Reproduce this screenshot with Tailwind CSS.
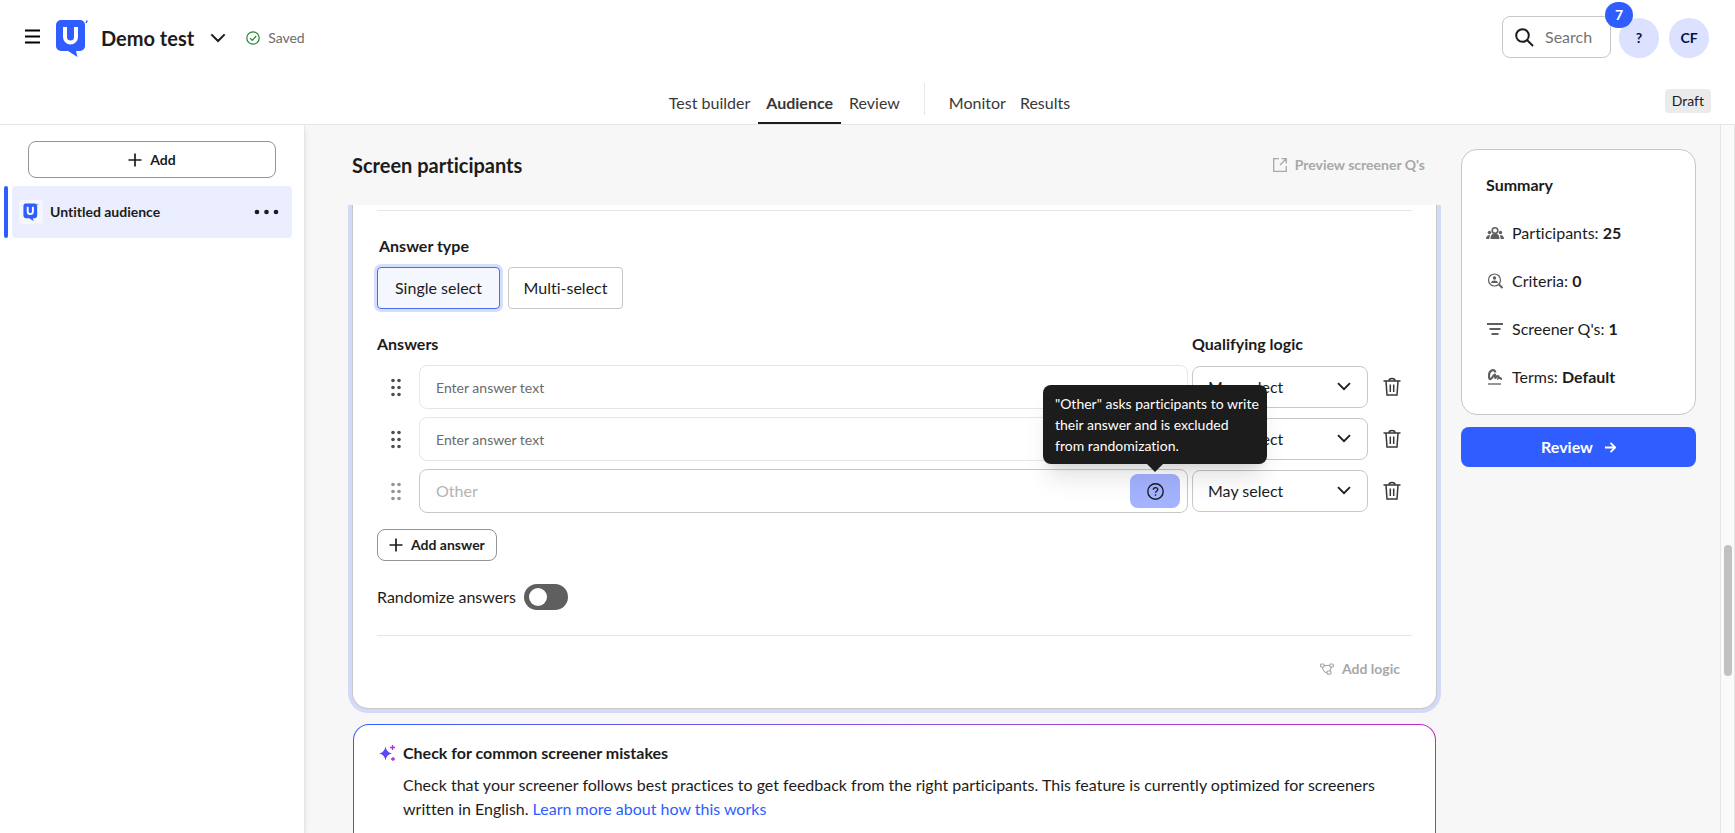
<!DOCTYPE html>
<html lang="en">
<head>
  <meta charset="UTF-8" />
  <meta name="viewport" content="width=device-width, initial-scale=1.0"/>
  <title>Demo test - Audience</title>

  <!-- Tailwind CDN -->
  <script src="https://cdn.jsdelivr.net/npm/@tailwindcss/browser@4"></script>
</head>

<body class="h-screen flex flex-col overflow-hidden bg-white text-[#1c1c1c] text-base font-['Lato','Open_Sans',sans-serif] [font-variant-ligatures:none]">

  <!-- Shared icons -->
  <svg class="hidden">
    <symbol id="logo" viewBox="0 0 32 38">
      <path fill="#305dff" d="M5 1h19a5 5 0 0 1 5 5v21a5 5 0 0 1-5 5h-4l1.500 6L12 32H5a5 5 0 0 1-5-5V6a5 5 0 0 1 5-5z"/>
      <path fill="none" stroke="#fff" stroke-width="4" d="M9 8v10a5.500 5.500 0 0 0 11 0V8"/>
      <path stroke="#305dff" stroke-width="1.500" d="M30 4l1.200-2.500"/>
    </symbol>
    <symbol id="plus" viewBox="0 0 14 14">
      <path fill="none" stroke="currentColor" stroke-width="1.700" d="M7 .5v13M.5 7h13"/>
    </symbol>
    <symbol id="chevron" viewBox="0 0 14 9">
      <path fill="none" stroke="currentColor" stroke-width="1.800" d="M1 1.200l6 6 6-6"/>
    </symbol>
    <symbol id="grip" viewBox="0 0 10 19">
      <g fill="currentColor"><circle cx="2" cy="2.500" r="1.800"/><circle cx="8" cy="2.500" r="1.800"/><circle cx="2" cy="9.500" r="1.800"/><circle cx="8" cy="9.500" r="1.800"/><circle cx="2" cy="16.500" r="1.800"/><circle cx="8" cy="16.500" r="1.800"/></g>
    </symbol>
    <symbol id="trash" viewBox="0 0 18 20">
      <g fill="none" stroke="currentColor" stroke-width="1.500"><path d="M.5 4h17M6 4c0-3.300 6-3.300 6 0M3 4l1 14h10l1-14M7.300 7.500v7.500M10.700 7.500v7.500"/></g>
    </symbol>
  </svg>

  <!-- Header -->
  <header class="shrink-0 border-b border-[#e6e6e6]">
    <div class="flex items-start justify-between pl-[25px] pr-[26px] h-[79px] pt-4">
      <div class="flex items-center h-11">
        <button aria-label="Menu" class="mb-1">
          <svg class="w-[15px] h-[15px]" viewBox="0 0 15 15"><path stroke="#000" stroke-width="2" d="M0 1.500h15M0 7.500h15M0 13.500h15"/></svg>
        </button>
        <a href="#" aria-label="Home" class="ml-4"><svg class="w-8 h-[38px]"><use href="#logo"/></svg></a>
        <h1 class="ml-[13px] text-xl font-bold">Demo test</h1>
        <button aria-label="Test menu" class="ml-4"><svg class="w-4 h-[10px]"><use href="#chevron"/></svg></button>
        <svg class="ml-5 w-[14px] h-[14px]" viewBox="0 0 14 14" fill="none" stroke="#268030" stroke-width="1.200"><circle cx="7" cy="7" r="6.200"/><path d="M4 7.200l2.200 2.200 4-4.400"/></svg>
        <span class="ml-2 text-sm text-[#6b6b6b]">Saved</span>
      </div>
      <div class="flex">
        <label class="flex items-center w-[109px] h-[42px] border border-[#c7c7c7] rounded-lg pl-3">
          <svg class="w-[19px] h-[19px] shrink-0" viewBox="0 0 19 19" fill="none" stroke="#1c1c1c" stroke-width="2"><circle cx="7.500" cy="7.500" r="6.300"/><path d="M12 12l6 6"/></svg>
          <input type="search" aria-label="Search" placeholder="Search" class="w-16 ml-[11px] placeholder:text-[#757575] outline-none">
        </label>
        <button class="relative ml-2 mt-[2px] size-10 rounded-full bg-[#dbe1ff] text-[#02104d] text-sm font-bold">?
          <span class="absolute -top-4 -left-[14px] w-7 h-[26px] rounded-full bg-[#305dff] text-white leading-[26px]">7</span>
        </button>
        <button class="ml-[10px] mt-[2px] size-10 rounded-full bg-[#dbe1ff] text-[#02104d] text-sm font-bold">CF</button>
      </div>
    </div>

    <div class="relative flex justify-center h-[45px]">
      <nav class="flex text-[#383838]">
        <a href="#" class="px-2 pt-3">Test builder</a>
        <a href="#" class="px-2 pt-3 font-bold border-b-2 border-[#1c1c1c]">Audience</a>
        <a href="#" class="px-2 pt-3">Review</a>
        <span class="w-px h-8 ml-4 mr-4 mt-1 bg-[#e6e6e6]"></span>
        <a href="#" class="px-2 pt-3">Monitor</a>
        <a href="#" class="pl-[6px] pr-1 pt-3">Results</a>
      </nav>
      <span class="absolute right-6 top-[10px] h-6 px-[7px] rounded bg-[#ebebeb] text-sm leading-6">Draft</span>
    </div>
  </header>

  <div class="flex flex-1 min-h-0 bg-[#f7f7f7]">

    <!-- Audience list -->
    <aside class="z-10 w-[305px] shrink-0 bg-white border-r border-[#e6e6e6] shadow-md pt-4">
      <button class="flex items-center justify-center gap-2 mx-7 w-[248px] h-[37px] rounded-lg border border-[#949494] text-sm font-bold">
        <svg class="size-[14px]"><use href="#plus"/></svg>Add
      </button>
      <div class="flex gap-1 mt-2 ml-1 mr-3 h-[52px]">
        <span class="w-1 rounded-sm bg-[#305dff]"></span>
        <div class="flex flex-1 items-center rounded bg-[#ebeefe] pl-[7px] pr-3">
          <span class="flex items-center justify-center size-6 rounded bg-[#f5f7ff]"><svg class="w-4 h-[18px]"><use href="#logo"/></svg></span>
          <span class="ml-[7px] text-sm font-bold">Untitled audience</span>
          <button aria-label="More" class="ml-auto"><svg class="w-[26px] h-[6px]" viewBox="0 0 26 6" fill="#1c1c1c"><circle cx="3" cy="3" r="2.300"/><circle cx="12.500" cy="3" r="2.300"/><circle cx="22" cy="3" r="2.300"/></svg></button>
        </div>
      </div>
    </aside>

    <!-- Screener -->
    <main class="flex-1 min-w-0 pl-[47px] pr-[5px] overflow-hidden">
      <div class="flex items-center justify-between h-20 pr-3">
        <h2 class="text-xl font-bold">Screen participants</h2>
        <button class="flex items-center gap-2 text-sm font-bold text-[#a8a8a8]">
          <svg class="size-[14px]" viewBox="0 0 14 14" fill="none" stroke="currentColor" stroke-width="1.300"><path d="M6 .7H.7v12.600h12.600V8M8.500 .7h4.800v4.800M13.300 .7L7 7"/></svg>
          Preview screener Q's
        </button>
      </div>

      <div class="-mx-1 px-1 pb-1 rounded-b-[20px] bg-[#d3daf9]">
        <section class="rounded-b-2xl border border-t-0 border-[#c7c7c7] bg-white px-6 pt-[5px]">
          <hr class="border-[#e6e6e6]">

          <h3 class="mt-[23px] ml-[2px] font-bold">Answer type</h3>
          <div class="flex gap-2 mt-[9px]">
            <button class="w-[123px] h-[42px] rounded border border-[#4a6df5] bg-[#f5f7ff] ring-3 ring-[#d6deff]">Single select</button>
            <button class="w-[115px] h-[42px] rounded border border-[#c7c7c7]">Multi-select</button>
          </div>

          <div class="flex mt-[23px] font-bold">
            <h3 class="flex-1">Answers</h3>
            <h3 class="w-[220px]">Qualifying logic</h3>
          </div>

          <!-- Answer rows -->
          <div class="flex flex-col gap-2 mt-[9px]">
            <div class="flex items-center">
              <button aria-label="Move" class="mx-[14px] text-[#4f4f4f]"><svg class="w-[10px] h-[19px]"><use href="#grip"/></svg></button>
              <input type="text" aria-label="Answer 1" placeholder="Enter answer text" class="flex-1 ml-1 h-11 px-4 text-sm rounded-lg border border-[#e6e6e6] placeholder:text-[#6b6b6b]">
              <div class="relative ml-1 w-[176px]">
                <select aria-label="Logic 1" class="appearance-none w-full h-[42px] px-[15px] rounded-lg border border-[#c7c7c7] bg-white"><option>May select</option></select>
                <svg class="absolute right-[17px] top-4 w-[14px] h-[9px] pointer-events-none"><use href="#chevron"/></svg>
              </div>
              <button aria-label="Delete" class="ml-[15px] mr-[11px] text-[#383838]"><svg class="w-[18px] h-5"><use href="#trash"/></svg></button>
            </div>
            <div class="flex items-center">
              <button aria-label="Move" class="mx-[14px] text-[#4f4f4f]"><svg class="w-[10px] h-[19px]"><use href="#grip"/></svg></button>
              <input type="text" aria-label="Answer 2" placeholder="Enter answer text" class="flex-1 ml-1 h-11 px-4 text-sm rounded-lg border border-[#e6e6e6] placeholder:text-[#6b6b6b]">
              <div class="relative ml-1 w-[176px]">
                <select aria-label="Logic 2" class="appearance-none w-full h-[42px] px-[15px] rounded-lg border border-[#c7c7c7] bg-white"><option>May select</option></select>
                <svg class="absolute right-[17px] top-4 w-[14px] h-[9px] pointer-events-none"><use href="#chevron"/></svg>
              </div>
              <button aria-label="Delete" class="ml-[15px] mr-[11px] text-[#383838]"><svg class="w-[18px] h-5"><use href="#trash"/></svg></button>
            </div>
            <div class="flex items-center">
              <button aria-label="Move" class="mx-[14px] text-[#949494]"><svg class="w-[10px] h-[19px]"><use href="#grip"/></svg></button>
              <div class="flex flex-1 items-center ml-1 h-11 pl-4 pr-[7px] rounded-lg border border-[#c7c7c7]">
                <input type="text" aria-label="Other answer" placeholder="Other" class="flex-1 placeholder:text-[#b3b3b3]">
                <div class="relative z-20">
                  <button aria-label="About Other" class="flex items-center justify-center w-[50px] h-[34px] rounded-lg bg-[#a3b3ff]">
                    <svg class="size-[17px]" viewBox="0 0 17 17" fill="none" stroke="#1c1c1c" stroke-width="1.400"><circle cx="8.500" cy="8.500" r="7.700"/><path d="M6.300 6.800c0-3 4.400-2.800 4.400-.2 0 1.600-2.200 1.600-2.200 3.200M8.500 11.200v1.500"/></svg>
                  </button>
                  <!-- Tooltip -->
                  <div role="tooltip" class="absolute -left-[87px] bottom-11 w-56 pl-3 pr-1 py-2 rounded-lg bg-[#1c1c1c] text-white text-sm leading-[21px] shadow-xl">
                    "Other" asks participants to write<br>their answer and is excluded<br>from randomization.
                    <svg class="absolute top-full left-[104px] w-4 h-2" viewBox="0 0 16 8"><path fill="#1c1c1c" d="M0 0h16L8 8z"/></svg>
                  </div>
                </div>
              </div>
              <div class="relative ml-1 w-[176px]">
                <select aria-label="Other logic" class="appearance-none w-full h-[42px] px-[15px] rounded-lg border border-[#c7c7c7] bg-white"><option>May select</option></select>
                <svg class="absolute right-[17px] top-4 w-[14px] h-[9px] pointer-events-none"><use href="#chevron"/></svg>
              </div>
              <button aria-label="Delete" class="ml-[15px] mr-[11px] text-[#383838]"><svg class="w-[18px] h-5"><use href="#trash"/></svg></button>
            </div>
          </div>

          <button class="flex items-center gap-2 mt-4 h-8 px-[11px] rounded-lg border border-[#949494] text-sm font-bold">
            <svg class="size-[14px]"><use href="#plus"/></svg>Add answer
          </button>

          <label class="flex items-center gap-2 mt-[23px]">
            Randomize answers
            <input type="checkbox" role="switch" class="appearance-none w-11 h-[26px] rounded-full bg-[#5f5f5f] before:block before:size-[18px] before:m-1 before:ml-[5px] before:rounded-full before:bg-white">
          </label>

          <hr class="mt-[25px] border-[#e6e6e6]">
          <div class="flex justify-end h-[72px] pr-3">
            <button class="flex items-center gap-2 h-[66px] text-sm font-bold text-[#a8a8a8]">
              <svg class="w-[14px] h-3" viewBox="0 0 14 12" fill="none" stroke="currentColor" stroke-width="1.200"><rect x=".6" y="1" width="3.600" height="3" rx="1"/><rect x="9.800" y="1" width="3.600" height="3" rx="1"/><rect x="7" y="8" width="4" height="3.200" rx="1.200"/><path d="M4.200 2.500h5.600M2.400 4C2.600 7 4.500 9.600 7 9.600M11.400 4L9.800 8"/></svg>
              Add logic
            </button>
          </div>
        </section>
      </div>

      <!-- Mistake check -->
      <div class="mt-[11px] mx-px p-px rounded-2xl bg-linear-to-r from-[#305dff] to-[#c026c9]">
        <section class="flex gap-2 rounded-[15px] bg-white pl-[25px] pr-6 pt-4 pb-16">
          <svg class="shrink-0 mt-1 size-4" viewBox="0 0 16 16">
            <path fill="#5f49f0" d="M6.500 1.500Q7.500 7.500 13 8.500 7.500 9.500 6.500 15.500 5.500 9.500 0 8.500 5.500 7.500 6.500 1.500z"/>
            <path fill="none" stroke="#b02fd0" stroke-width="1.300" d="M13.500 0v5M11 2.500h5M14 12v4M12 14h4"/>
          </svg>
          <div class="leading-6">
            <h3 class="font-bold">Check for common screener mistakes</h3>
            <p class="mt-2">Check that your screener follows best practices to get feedback from the right participants. This feature is currently optimized for screeners written in English. <a href="#" class="text-[#305dff]">Learn more about how this works</a></p>
          </div>
        </section>
      </div>
    </main>

    <!-- Summary -->
    <aside class="w-[235px] shrink-0 ml-[19px] mr-6 pt-6">
      <section class="h-[266px] rounded-2xl border border-[#c7c7c7] bg-white px-6 pt-[23px] leading-6">
        <h3 class="font-bold">Summary</h3>
        <ul class="flex flex-col gap-6 mt-6">
          <li class="flex items-center gap-2">
            <svg class="w-[18px] h-4" viewBox="0 0 18 16" fill="#5f5f5f"><circle cx="3.500" cy="7.500" r="1.700"/><circle cx="14.500" cy="7.500" r="1.700"/><circle cx="9" cy="5.500" r="2.800" fill="none" stroke="#5f5f5f" stroke-width="1.600"/><path d="M0 14c0-2.500 1.500-4 4-4l-.8 4zM18 14c0-2.500-1.500-4-4-4l.8 4zM4.500 14c0-4 1.800-5.500 4.500-5.500s4.500 1.500 4.500 5.500z"/></svg>
            <span>Participants: <b>25</b></span>
          </li>
          <li class="flex items-center gap-2">
            <svg class="w-[18px] h-4" viewBox="0 0 18 16" fill="#5f5f5f"><circle cx="8.500" cy="7" r="6" fill="none" stroke="#5f5f5f" stroke-width="1.200"/><circle cx="8.500" cy="5" r="1.700"/><path d="M5 10c0-3.300 7-3.300 7 0z"/><path stroke="#5f5f5f" stroke-width="2" d="M13 11.500l3.500 3.500"/></svg>
            <span>Criteria: <b>0</b></span>
          </li>
          <li class="flex items-center gap-2">
            <svg class="w-[18px] h-4" viewBox="0 0 18 16" stroke="#5f5f5f" stroke-width="2"><path d="M1 3h16M3.500 8h11M5.500 13h7"/></svg>
            <span>Screener Q's: <b>1</b></span>
          </li>
          <li class="flex items-center gap-2">
            <svg class="w-[18px] h-4" viewBox="0 0 18 16" fill="none" stroke="#5f5f5f"><path stroke-width="2.200" d="M9.500 3.500C8-1 3 1.500 3 6.500S5 11 7 7.500s3-1.500 2 2c2.500-3.500 4-3 3.500-.5 2-1 1.500 1 3.500 1"/><path stroke-width="1.300" d="M2 15h13"/></svg>
            <span>Terms: <b>Default</b></span>
          </li>
        </ul>
      </section>
      <button class="flex items-center justify-center gap-3 mt-3 w-full h-10 rounded-lg bg-[#305dff] text-white font-bold">
        Review
        <svg class="w-[11px] h-[11px]" viewBox="0 0 11 11" fill="none" stroke="currentColor" stroke-width="1.800"><path d="M0 5.500h10M5.500 .8l4.700 4.700-4.700 4.700"/></svg>
      </button>
    </aside>

    <!-- Scrollbar -->
    <div class="relative shrink-0 w-[15px] border-x border-[#e6e6e6] bg-[#fafafa]">
      <span class="absolute left-[3px] top-[420px] w-2 h-[131px] rounded-full bg-[#c1c1c1]"></span>
    </div>
  </div>

</body>
</html>
